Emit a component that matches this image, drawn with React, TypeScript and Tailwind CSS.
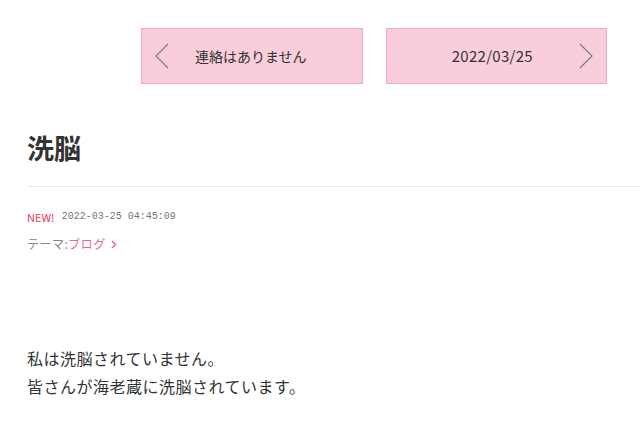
const jp = "font-['Noto_Sans_CJK_JP',sans-serif]"

const Chevron = ({ dir }: { dir: 'left' | 'right' }) => (
  <svg width="14" height="26" viewBox="0 0 14 26" fill="none">
    <path
      d={dir === 'left' ? 'M13 1 L1 13 L13 25' : 'M1 1 L13 13 L1 25'}
      stroke="#7a7a85"
      strokeWidth="1.2"
    />
  </svg>
)

export default function App() {
  return (
    <div className={`min-h-[427px] w-[640px] overflow-hidden bg-white ${jp}`}>
      <div className="ml-[141px] mt-[28px] flex gap-[23px]">
        <div className="flex h-[56px] w-[222px] items-center border border-[#f3a9bc] bg-[#f9cdda] pl-[13px]">
          <Chevron dir="left" />
          <span className="ml-[26px] text-[14px] text-[#333]">連絡はありません</span>
        </div>
        <div className="flex h-[56px] w-[221px] items-center justify-end border border-[#f3a9bc] bg-[#f9cdda] pr-[13px]">
          <span className="mr-[46px] text-[15px] tracking-[0.3px] text-[#333]">2022/03/25</span>
          <Chevron dir="right" />
        </div>
      </div>

      <h1 className="ml-[27px] mt-[48px] text-[27px] leading-[32px] font-bold text-[#333]">洗脳</h1>

      <div className="ml-[27px] mt-[22px] h-px bg-[#fde0e8]" />

      <div className="ml-[27px] mt-[22px] flex items-center gap-[7px] text-[11px] leading-[16px]">
        <span className="text-[#f0335b]">NEW!</span>
        <span className="font-['Liberation_Mono',monospace] text-[10px] text-[#777]">2022-03-25 04:45:09</span>
      </div>

      <div className="ml-[27px] mt-[10px] flex items-center text-[12px] leading-[18px] tracking-[0.5px] text-[#888]">
        <span>テーマ:</span>
        <span className="text-[#e8669a]">ブログ</span>
        <svg className="ml-[5px]" width="6" height="9" viewBox="0 0 6 9" fill="none">
          <path d="M1 1 L4.5 4.5 L1 8" stroke="#e8669a" strokeWidth="1.5" />
        </svg>
      </div>

      <div className="ml-[27px] mt-[91px] text-[16px] leading-[28px] tracking-[0.5px] text-[#333]">
        <p>私は洗脳されていません。</p>
        <p>皆さんが海老蔵に洗脳されています。</p>
      </div>
    </div>
  )
}
